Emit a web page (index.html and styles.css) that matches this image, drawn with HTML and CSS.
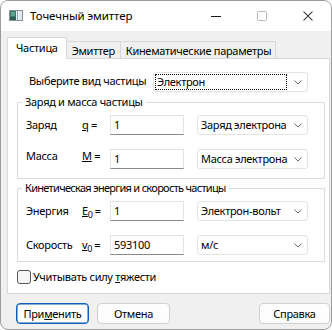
FILE: index.html
```html
<!DOCTYPE html>
<html lang="ru">
<head>
<meta charset="utf-8">
<title>Точечный эмиттер</title>
<link rel="stylesheet" href="styles.css">
</head>
<body>
<div class="window">
  <div class="titlebar">
    <svg class="app-icon" width="14" height="11" viewBox="0 0 14 11">
      <rect x="0.5" y="0.5" width="13" height="10" fill="#f4f8fb" stroke="#8a8f94"/>
      <rect x="1" y="1" width="6" height="9" fill="#3d7a6a"/>
      <rect x="2" y="2" width="4" height="4" fill="#5aa58c"/>
      <rect x="1" y="7" width="6" height="3" fill="#2f5f56"/>
      <rect x="8" y="1" width="1" height="9" fill="#7aa0b8"/>
      <rect x="10" y="1" width="3" height="9" fill="#dbe8f2"/>
    </svg>
    <span class="title">Точечный эмиттер</span>
    <div class="controls">
      <span class="ctl"><svg width="12" height="12" viewBox="0 0 12 12"><path d="M1 6.5h10" stroke="#1a1a1a" stroke-width="1"/></svg></span>
      <span class="ctl"><svg width="12" height="12" viewBox="0 0 12 12"><rect x="1.5" y="1.5" width="9" height="9" rx="1" fill="none" stroke="#b8b8b8"/></svg></span>
      <span class="ctl"><svg width="12" height="12" viewBox="0 0 12 12"><path d="M1.5 1.5l9 9M10.5 1.5l-9 9" stroke="#1a1a1a" stroke-width="1.05"/></svg></span>
    </div>
  </div>
  <div class="client">
    <div class="tabs">
      <div class="tab active">Частица</div>
      <div class="tab">Эмиттер</div>
      <div class="tab">Кинематические параметры</div>
    </div>
    <div class="panel">
      <div class="kind-row">
        <span class="kind-label">Выберите вид частицы</span>
        <div class="select kind-select">
          <span class="focus">Электрон</span>
          <svg class="chev" width="8" height="5" viewBox="0 0 8 5"><path d="M0.5 0.5l3.5 3.5 3.5-3.5" fill="none" stroke="#6a6a6a"/></svg>
        </div>
      </div>

      <fieldset class="group g1">
        <legend>Заряд и масса частицы</legend>
        <div class="row">
          <span class="name">Заряд</span>
          <span class="sym"><u>q</u> =</span>
          <div class="input">1</div>
          <div class="select unit"><span>Заряд электрона</span><svg class="chev" width="8" height="5" viewBox="0 0 8 5"><path d="M0.5 0.5l3.5 3.5 3.5-3.5" fill="none" stroke="#6a6a6a"/></svg></div>
        </div>
        <div class="row raised">
          <span class="name">Масса</span>
          <span class="sym"><u>M</u> =</span>
          <div class="input">1</div>
          <div class="select unit"><span>Масса электрона</span><svg class="chev" width="8" height="5" viewBox="0 0 8 5"><path d="M0.5 0.5l3.5 3.5 3.5-3.5" fill="none" stroke="#6a6a6a"/></svg></div>
        </div>
      </fieldset>

      <fieldset class="group g2">
        <legend>Кинетическая энергия и скорость частицы</legend>
        <div class="row">
          <span class="name">Энергия</span>
          <span class="sym"><u>E</u><sub>0</sub>=</span>
          <div class="input">1</div>
          <div class="select unit"><span>Электрон-вольт</span><svg class="chev" width="8" height="5" viewBox="0 0 8 5"><path d="M0.5 0.5l3.5 3.5 3.5-3.5" fill="none" stroke="#6a6a6a"/></svg></div>
        </div>
        <div class="row">
          <span class="name">Скорость</span>
          <span class="sym"><u>v</u><sub>0</sub>=</span>
          <div class="input">593100</div>
          <div class="select unit"><span>м/с</span><svg class="chev" width="8" height="5" viewBox="0 0 8 5"><path d="M0.5 0.5l3.5 3.5 3.5-3.5" fill="none" stroke="#6a6a6a"/></svg></div>
        </div>
      </fieldset>

      <div class="check">
        <span class="box"></span>
        <span>Учитывать силу <u>т</u>яжести</span>
      </div>
    </div>
    <div class="buttons">
      <div class="btn primary">При<u>м</u>енить</div>
      <div class="btn">Отмена</div>
      <div class="btn help">Справка</div>
    </div>
  </div>
</div>
</body>
</html>
```

FILE: styles.css
```css
* { box-sizing: border-box; }

html, body {
  margin: 0;
  padding: 0;
  background: #ffffff;
}

body {
  font-family: "Noto Sans", "Open Sans", sans-serif;
  font-size: 11px;
  letter-spacing: -0.3px;
  color: #000;
  line-height: 16px;
}

.window {
  width: 332px;
  height: 330px;
  border: 1px solid #9c9c9c;
  border-radius: 8px;
  overflow: hidden;
  display: flex;
  flex-direction: column;
  background: #f0f0f0;
}

.titlebar {
  height: 30px;
  flex: none;
  background: #ffffff;
  display: flex;
  align-items: center;
  padding-left: 8px;
}

.app-icon {
  display: block;
  margin-top: -1px;
}

.title {
  margin-left: 7px;
  font-size: 11.5px;
  letter-spacing: -0.1px;
  flex: 1;
  white-space: nowrap;
}

.controls {
  display: flex;
  height: 30px;
}

.ctl {
  width: 46px;
  height: 30px;
  display: flex;
  align-items: center;
  justify-content: center;
}

.client {
  flex: 1;
  display: flex;
  flex-direction: column;
  padding: 6px 1px 0 6px;
}

.tabs {
  display: flex;
  align-items: flex-end;
  height: 22px;
}

.tab {
  height: 18px;
  padding: 0 5px;
  border: 1px solid #d9d9d9;
  border-bottom: none;
  margin-left: -1px;
  background: #f0f0f0;
  display: flex;
  align-items: center;
  white-space: nowrap;
}

.tab.active {
  margin-left: 0;
  height: 22px;
  padding: 0 8px 2px;
  background: #ffffff;
  position: relative;
  z-index: 1;
}

.tab:last-child { padding: 0 4px 0 5px; }

.panel {
  margin-top: -1px;
  height: 236px;
  background: #ffffff;
  border: 1px solid #d9d9d9;
  display: flex;
  flex-direction: column;
}

.kind-row {
  display: flex;
  align-items: center;
  margin-top: 13px;
  padding: 0 21px;
  height: 20px;
}

.kind-label {
  flex: 1;
  margin-top: -2px;
  white-space: nowrap;
}

.select {
  height: 20px;
  background: #ffffff;
  border: 1px solid #e3e3e3;
  border-radius: 3px;
  display: flex;
  align-items: center;
  padding-left: 3px;
  padding-right: 5px;
}

.select span { flex: 1; white-space: nowrap; }

.chev { display: block; flex: none; }

.kind-select {
  width: 155px;
  flex: none;
  padding-left: 1px;
  padding-right: 5px;
}

.kind-select .focus {
  height: 16px;
  border: 1px dotted #000;
  margin-right: 7px;
  padding-left: 1px;
  line-height: 14px;
}

.group {
  margin: 2px 4px 0 9px;
  border: 1px solid #dcdcdc;
  padding: 5px 0 9px 8px;
  min-width: 0;
}

.group legend {
  padding: 0 3px;
  margin-left: -4px;
  line-height: 16px;
}

.g2 {
  margin-top: 1px;
  padding-bottom: 6px;
}

.g2 legend { letter-spacing: -0.7px; }

.row {
  display: grid;
  grid-template-columns: 56px 28px 74px 124px;
  align-items: center;
  height: 20px;
}

.row + .row { margin-top: 14px; }

.row .unit { margin-left: 13px; width: 111px; }

.row.raised .name,
.row.raised .sym { margin-top: -6px; }

.name, .sym { white-space: nowrap; }

.sym sub {
  font-size: 9px;
  vertical-align: -3px;
  line-height: 0;
  margin-right: 2px;
}

.input {
  height: 20px;
  border: 1px solid #e3e3e3;
  border-bottom-color: #8a8a8a;
  background: #fff;
  padding-left: 3px;
  line-height: 18px;
}

.check {
  display: flex;
  align-items: center;
  margin: 8px 0 0 9px;
  height: 14px;
}

.check .box {
  width: 14px;
  height: 14px;
  border: 1px solid #555;
  border-radius: 3px;
  background: #f7f7f7;
  margin-right: 2px;
}

.buttons {
  display: flex;
  margin-top: 9px;
  padding-left: 9px;
}

.btn {
  width: 73px;
  height: 21px;
  border: 1px solid #d0d0d0;
  border-radius: 4px;
  background: #fdfdfd;
  display: flex;
  align-items: center;
  justify-content: center;
  margin-right: 8px;
}

.btn.primary {
  border-color: #0f5fb8;
  box-shadow: inset 0 0 0 0.5px #0f5fb8;
}

.btn.help {
  margin-left: auto;
  margin-right: 0;
  width: 71px;
}
```
